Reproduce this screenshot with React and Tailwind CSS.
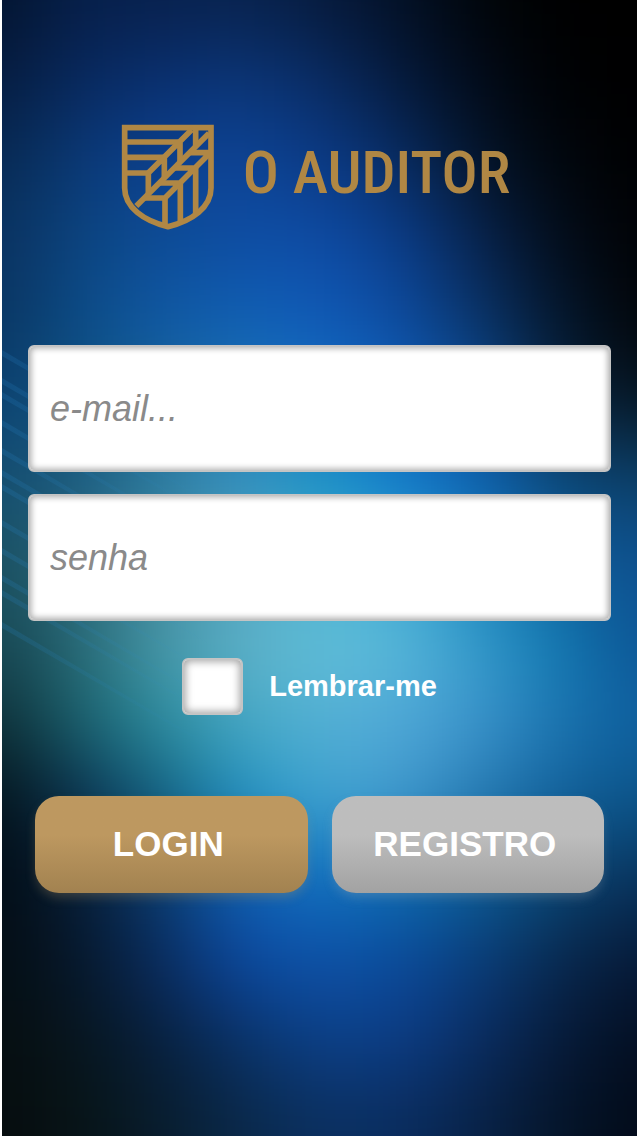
import { useState } from "react";

const CELL = 80;

// one colour per 80px cell, left to right
const glow = [
  ["#04142e", "#061f4a", "#08204c", "#08234f", "#061a3c", "#031025", "#010508", "#000000", "#000000"],
  ["#051c40", "#08295f", "#0a3070", "#0b3679", "#0a2c64", "#051a3c", "#020a18", "#000103", "#000000"],
  ["#072a52", "#0b3a78", "#0c4090", "#0d4496", "#0b3a86", "#082c62", "#041428", "#01060c", "#000001"],
  ["#0a3260", "#0c4580", "#0d4c96", "#0e4ea4", "#0e4ca6", "#0b3c88", "#07224c", "#030c18", "#010205"],
  ["#0a3560", "#0c4c88", "#1058a4", "#1060b4", "#105ab8", "#0d4ca0", "#0a3468", "#04162c", "#020508"],
  ["#0c4272", "#0f5580", "#1a6898", "#2078b4", "#1474c8", "#1160bc", "#0c4c94", "#08243e", "#061420"],
  ["#154e70", "#1f5e80", "#2f7ea0", "#3a92c0", "#1a96c4", "#107ccc", "#0e60b0", "#0c4a7a", "#0c3f68"],
  ["#1a4f60", "#2a6a80", "#3f88a0", "#4fa4c0", "#48b0d0", "#3aa4d4", "#1884c0", "#0f5c98", "#0e5090"],
  ["#184854", "#2a6c78", "#4a98a8", "#5fb0c8", "#62c0d8", "#58b8d8", "#3098c8", "#1078b0", "#0c5494"],
  ["#0e3038", "#1a6470", "#2c8ea0", "#46a8c4", "#54b0d4", "#50a8d8", "#3c94cc", "#1a74b0", "#0f60a0"],
  ["#04141c", "#0a3050", "#12607e", "#2090c0", "#40a4d0", "#4098cc", "#2478b0", "#12609a", "#0b5488"],
  ["#030c14", "#071e38", "#0b3c70", "#1060b4", "#1070c0", "#0c6cb0", "#0c5c94", "#0a4470", "#08305a"],
  ["#050e14", "#06182c", "#0a2c60", "#0c48a0", "#0d52a8", "#0c4a9c", "#0a3c78", "#08284e", "#061836"],
  ["#060e10", "#07161e", "#08203e", "#0a3268", "#0c4088", "#0c3c84", "#0a2c60", "#061a38", "#030e20"],
  ["#060c0e", "#071416", "#081c2c", "#0a2848", "#0b3060", "#0a2c5e", "#082246", "#051428", "#020a18"],
];

const streaks = [350, 378, 392, 420, 448, 470, 484, 520, 548, 575, 590, 622];

const Backdrop = () => (
  <svg
    className="absolute inset-0 -z-10 h-full w-full"
    viewBox="0 0 636 1136"
    preserveAspectRatio="none"
    aria-hidden="true"
  >
    <defs>
      <filter id="soften" filterUnits="userSpaceOnUse" x="-160" y="-160" width="960" height="1460" colorInterpolationFilters="sRGB">
        <feGaussianBlur stdDeviation="40" />
      </filter>
      <linearGradient id="streak" x1="0" x2="1" y1="0" y2="0">
        <stop offset="0" stopColor="#2a8ad0" stopOpacity="0.18" />
        <stop offset="1" stopColor="#2a8ad0" stopOpacity="0" />
      </linearGradient>
    </defs>
    <g filter="url(#soften)">
      {glow.map((row, r) =>
        row.map((color, c) => {
          const left = c === 0 ? -160 : c * CELL - 40;
          const right = c === row.length - 1 ? 800 : c * CELL + 41;
          const top = r === 0 ? -160 : r * CELL - 40;
          const bottom = r === glow.length - 1 ? 1300 : r * CELL + 41;
          return (
            <rect key={`${r}-${c}`} x={left} y={top} width={right - left} height={bottom - top} fill={color} />
          );
        })
      )}
    </g>
    {streaks.map((y) => (
      <path key={y} d={`M0 ${y} L220 ${y + 130} L220 ${y + 132} L0 ${y + 6} Z`} fill="url(#streak)" />
    ))}
  </svg>
);

const Shield = () => (
  <svg
    className="h-[106px] w-[94px] shrink-0"
    viewBox="36 40 282 318"
    fill="none"
    stroke="#b08744"
    strokeWidth="17"
    aria-hidden="true"
  >
    <path d="M47 51H306V232C306 290 250 330 177 348C104 330 47 290 47 232Z" />
    <path d="M47 94H208M47 140H162M47 187H118" />
    <path d="M118 250V187L248 57M260 51V108M166 141V202M213 94V155" />
    <path d="M82 286L300 68" />
    <path d="M108 262H168L300 130M306 126H244M150 217H213M196 172H260" />
    <path d="M168 262V345M214 217V333M260 172V308" />
  </svg>
);

const fieldClass =
  "h-[127px] w-full rounded-md border-2 border-[#c4c4c4] bg-white px-5 text-4xl text-gray-700 italic shadow-[inset_0_0_6px_1px_rgba(0,0,0,0.35)] outline-none placeholder:text-[#8a8a8a]";

const buttonClass = "h-[97px] flex-1 rounded-3xl pr-1.5 text-[35px] font-bold text-white";

export default function App() {
  const [email, setEmail] = useState("");
  const [password, setPassword] = useState("");
  const [remember, setRemember] = useState(false);

  return (
    <main className="relative isolate min-h-screen overflow-hidden border-x-2 border-white px-[26px] pt-[124px] pb-12 font-['Liberation_Sans',Arial,sans-serif]">
      <Backdrop />

      <header className="flex items-center justify-center gap-7 pr-2">
        <Shield />
        <h1 className="mb-2 font-['Liberation_Sans_Narrow','Roboto_Condensed','Liberation_Sans',sans-serif] text-[60px] leading-none font-medium whitespace-nowrap text-[#b08744]">
          O AUDITOR
        </h1>
      </header>

      <form className="mt-[115px]" onSubmit={(e) => e.preventDefault()}>
        <div className="flex flex-col gap-[22px]">
          <input
            type="email"
            aria-label="e-mail"
            placeholder="e-mail..."
            value={email}
            onChange={(e) => setEmail(e.target.value)}
            className={fieldClass}
          />
          <input
            type="password"
            aria-label="senha"
            placeholder="senha"
            value={password}
            onChange={(e) => setPassword(e.target.value)}
            className={fieldClass}
          />
        </div>

        <div className="mt-[37px] flex items-center justify-center gap-[26px] pr-5">
          <input
            id="remember"
            type="checkbox"
            checked={remember}
            onChange={(e) => setRemember(e.target.checked)}
            className="h-[57px] w-[61px] appearance-none rounded-md border-2 border-[#c4c4c4] bg-white shadow-[inset_0_0_8px_1px_rgba(0,0,0,0.4)] checked:bg-[#b9945d]"
          />
          <label htmlFor="remember" className="text-[29px] font-bold text-white">
            Lembrar-me
          </label>
        </div>

        <div className="mt-[81px] flex gap-6 px-[7px]">
          <button
            type="submit"
            className={`${buttonClass} bg-linear-to-b from-[#bd9860] from-40% to-[#a28250] shadow-[0_6px_12px_-2px_rgba(189,152,96,0.3)]`}
          >
            LOGIN
          </button>
          <button
            type="button"
            className={`${buttonClass} bg-linear-to-b from-[#bdbdbd] from-40% to-[#a2a2a2] shadow-[0_6px_12px_-2px_rgba(189,189,189,0.25)]`}
          >
            REGISTRO
          </button>
        </div>
      </form>
    </main>
  );
}
